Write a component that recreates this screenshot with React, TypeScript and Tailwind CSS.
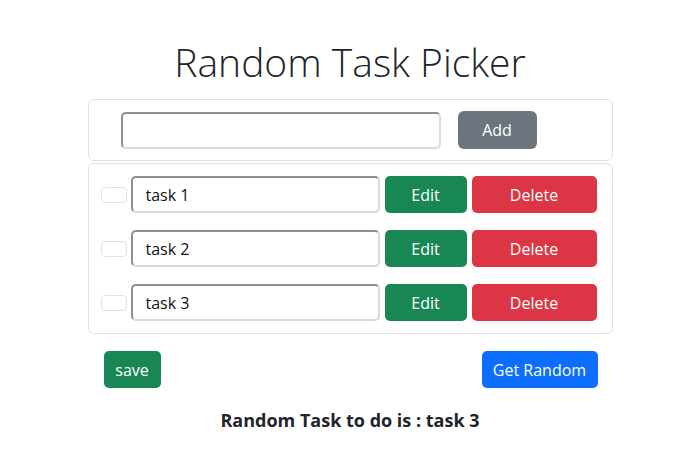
const tasks = ['task 1', 'task 2', 'task 3']

function TaskInput({ value, width }: { value?: string; width: string }) {
  return (
    <input
      readOnly
      value={value ?? ''}
      className={`${width} h-[37px] rounded-[5px] border-2 border-t-[#8f8f8f] border-l-[#8f8f8f] border-b-[#dadada] border-r-[#dadada] bg-white pl-[13px] text-[16px] text-[#111] outline-none`}
    />
  )
}

export default function App() {
  return (
    <div className="w-[700px] h-[456px] bg-white font-['Open_Sans',sans-serif] text-[#212529]">
      <h1 className="pt-[38px] text-center text-[39px] leading-[48px] font-light">Random Task Picker</h1>

      <div className="mx-auto mt-[13px] w-[525px]">
        {/* add form */}
        <div className="flex h-[62px] items-center rounded-md border border-[#dee2e6] pl-[32px]">
          <TaskInput width="w-[320px]" />
          <button className="ml-[17px] h-[38px] w-[79px] rounded-md bg-[#6c757d] text-[16px] text-white">Add</button>
        </div>

        {/* task list */}
        <div className="mt-[2px] flex flex-col gap-[17px] rounded-md border border-[#dee2e6] px-[12px] py-[12px]">
          {tasks.map(t => (
            <div key={t} className="flex h-[37px] items-center">
              <div className="h-[16px] w-[26px] rounded-[4px] border border-[#dee2e6] bg-white" />
              <div className="ml-[4px]">
                <TaskInput value={t} width="w-[249px]" />
              </div>
              <button className="ml-[5px] h-[37px] w-[82px] rounded-[5px] bg-[#198754] text-[16px] text-white">Edit</button>
              <button className="ml-[5px] h-[37px] w-[125px] rounded-[5px] bg-[#dc3545] text-[16px] text-white">Delete</button>
            </div>
          ))}
        </div>

        <div className="mt-[17px] flex justify-between pl-[16px] pr-[15px]">
          <button className="h-[37px] w-[57px] rounded-[5px] bg-[#198754] text-[16px] text-white">save</button>
          <button className="h-[37px] w-[116px] rounded-[5px] bg-[#0d6efd] text-[16px] text-white">Get Random</button>
        </div>

        <p className="mt-[20px] text-center text-[18px] font-bold leading-[24px]">Random Task to do is : task 3</p>
      </div>
    </div>
  )
}
